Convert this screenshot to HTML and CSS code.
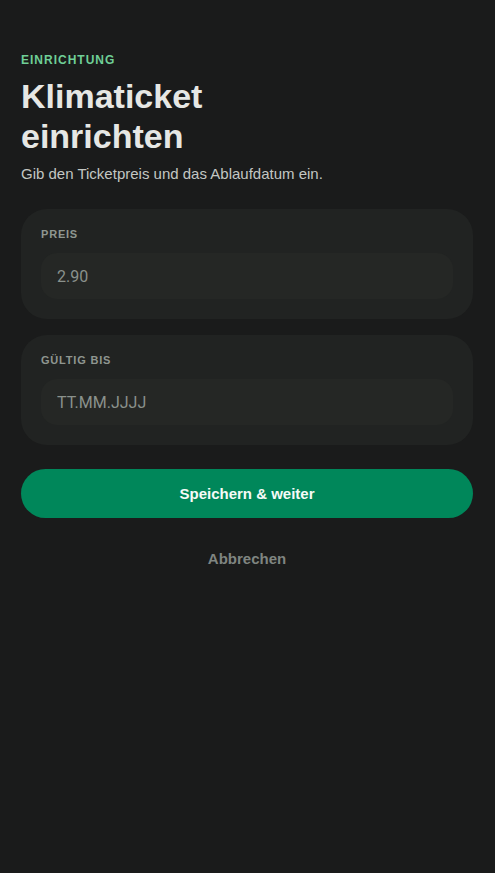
FILE: index.html
```html
<!DOCTYPE html>
<html lang="de">
  <head>
    <meta charset="UTF-8" />
    <meta name="viewport" content="width=device-width, initial-scale=1.0" />
    <title>Klimaticket einrichten</title>
    <link rel="stylesheet" href="styles.css">
  </head>
  <body>
    <main class="setup">
      <header class="head">
        <p class="eyebrow">Einrichtung</p>
        <h1 class="title">Klimaticket einrichten</h1>
        <p class="subtitle">Gib den Ticketpreis und das Ablaufdatum ein.</p>
      </header>

      <div class="fields">
        <label class="card">
          <span class="label">Preis</span>
          <input class="input" type="text" value="2.90" />
        </label>
        <label class="card">
          <span class="label">Gültig bis</span>
          <input class="input" type="text" placeholder="TT.MM.JJJJ" />
        </label>
      </div>

      <div class="actions">
        <button class="btn-primary">Speichern &amp; weiter</button>
        <button class="btn-link">Abbrechen</button>
      </div>
    </main>
  </body>
</html>
```

FILE: styles.css
```css
* {
  margin: 0;
  padding: 0;
  box-sizing: border-box;
}

body {
  background: #1a1b1b;
  font-family: "Liberation Sans", Arial, sans-serif;
  color: #e6e7e4;
  min-height: 100vh;
}

.setup {
  padding: 53px 22px 40px 21px;
  display: flex;
  flex-direction: column;
}

.eyebrow {
  font-size: 12px;
  font-weight: 700;
  letter-spacing: 1px;
  text-transform: uppercase;
  color: #6fcf97;
  line-height: 14px;
}

.title {
  margin-top: 9px;
  font-size: 34px;
  font-weight: 700;
  line-height: 40px;
  color: #e6e7e4;
  width: 260px;
}

.subtitle {
  margin-top: 8px;
  font-size: 15px;
  line-height: 20px;
  color: #c3c7c3;
}

.fields {
  margin-top: 25px;
  display: flex;
  flex-direction: column;
  gap: 16px;
}

.card {
  display: flex;
  flex-direction: column;
  background: #212322;
  border-radius: 26px;
  padding: 19px 20px 20px 20px;
}

.label {
  font-size: 11px;
  font-weight: 700;
  letter-spacing: 0.8px;
  text-transform: uppercase;
  color: #8f9690;
  line-height: 13px;
}

.input {
  margin-top: 12px;
  height: 46px;
  border: none;
  outline: none;
  border-radius: 16px;
  background: #252725;
  padding: 0 16px;
  font-family: Roboto, sans-serif;
  font-size: 16px;
  color: #8a918c;
}

.input::placeholder {
  color: #8a918c;
}

.actions {
  margin-top: 24px;
  display: flex;
  flex-direction: column;
  align-items: center;
}

.btn-primary {
  width: 100%;
  height: 49px;
  border: none;
  border-radius: 25px;
  background: #00875a;
  color: #f5fbf7;
  font-family: "Liberation Sans", Arial, sans-serif;
  font-size: 15px;
  font-weight: 700;
  cursor: pointer;
}

.btn-link {
  margin-top: 23px;
  background: none;
  border: none;
  color: #7f8581;
  font-family: "Liberation Sans", Arial, sans-serif;
  font-size: 15px;
  font-weight: 700;
  cursor: pointer;
  line-height: 35px;
}
```
